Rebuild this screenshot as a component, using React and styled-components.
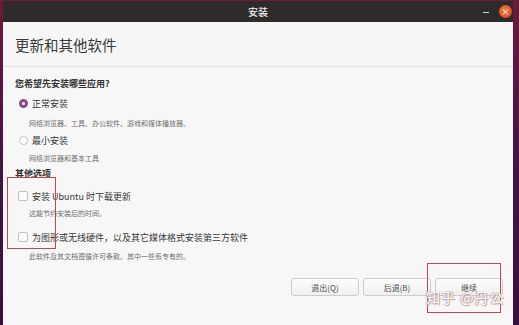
import React from 'react';
import styled, { createGlobalStyle } from 'styled-components';

const GlobalStyle = createGlobalStyle`
  html, body {
    margin: 0;
    padding: 0;
    width: 519px;
    height: 325px;
    overflow: hidden;
  }
  body {
    font-family: "Noto Sans CJK SC", "Noto Sans", "Liberation Sans", sans-serif;
  }
`;

const Desktop = styled.div`
  position: relative;
  width: 519px;
  height: 325px;
  box-sizing: border-box;
  padding: 1px 6px 0 3px;
  background: linear-gradient(180deg, #6e1a3a 0%, #4a1246 45%, #3a0e42 100%);
`;

const Window = styled.div`
  display: flex;
  flex-direction: column;
  height: 100%;
  background: #f7f7f7;
`;

const TitleBar = styled.div`
  display: grid;
  grid-template-columns: 1fr auto 1fr;
  align-items: center;
  height: 21px;
  background: #2e2b2b;
  color: #f2f2f2;
  font-size: 10px;
  font-weight: 500;
`;

const Title = styled.span`
  grid-column: 2;
`;

const Controls = styled.div`
  grid-column: 3;
  display: flex;
  justify-content: flex-end;
  align-items: center;
  gap: 10px;
  padding-right: 1px;
`;

const MinButton = styled.span`
  width: 6px;
  height: 1px;
  background: #cfcfcf;
  margin-top: 2px;
`;

const CloseButton = styled.span`
  display: flex;
  align-items: center;
  justify-content: center;
  width: 13px;
  height: 13px;
  border-radius: 50%;
  background: radial-gradient(circle at 45% 40%, #f07a4a 0%, #e0582a 60%, #c9461f 100%);
  color: #ffe7da;
  font-size: 9px;
  line-height: 1;
`;

const Header = styled.div`
  display: flex;
  align-items: center;
  height: 44px;
  padding-left: 12px;
  background: #f6f6f6;
  border-bottom: 1px solid #e4e4e4;
  color: #3a3a3a;
  font-size: 14.5px;
`;

const Body = styled.div`
  flex: 1;
  display: flex;
  flex-direction: column;
  padding: 10px 12px 0 12px;
  color: #3c3c3c;
`;

const SectionLabel = styled.div`
  margin-top: ${(p) => p.$mt || 0}px;
  line-height: 14px;
  font-size: 9px;
  font-weight: 700;
  color: #333;
`;

const OptionRow = styled.div`
  display: flex;
  align-items: center;
  gap: 4px;
  margin-top: ${(p) => p.$mt || 0}px;
  height: 18px;
  font-size: 9px;
  color: #383838;
`;

const Radio = styled.span`
  box-sizing: border-box;
  width: 9px;
  height: 9px;
  margin-left: 4px;
  border-radius: 50%;
  border: ${(p) => (p.$checked ? '3px solid #8c4a86' : '1px solid #c4c4c4')};
  background: #fff;
`;

const Check = styled.span`
  box-sizing: border-box;
  width: 10px;
  height: 10px;
  margin-left: 3px;
  border-radius: 2px;
  border: 1px solid #c2c2c2;
  background: #fbfbfb;
`;

const Desc = styled.div`
  margin-top: ${(p) => p.$mt || 0}px;
  padding-left: 14px;
  line-height: 12px;
  font-size: 7px;
  color: #6f6f6f;
`;

const Footer = styled.div`
  display: flex;
  justify-content: flex-end;
  gap: 4px;
  padding: 0 10px 29px 0;
`;

const Button = styled.button`
  box-sizing: border-box;
  width: 68px;
  height: 18px;
  padding: 0;
  border: 1px solid #cdcdcd;
  border-radius: 3px;
  background: linear-gradient(180deg, #fdfdfd, #f0f0f0);
  color: #4a4a4a;
  font-family: inherit;
  font-size: 8px;
`;

const Mark = styled.div`
  position: absolute;
  left: ${(p) => p.$x}px;
  top: ${(p) => p.$y}px;
  width: ${(p) => p.$w}px;
  height: ${(p) => p.$h}px;
  border: 1.5px solid #c0474f;
  box-sizing: border-box;
  pointer-events: none;
`;

const Watermark = styled.div`
  position: absolute;
  left: 426px;
  top: 290px;
  font-size: 14px;
  line-height: 14px;
  letter-spacing: 1px;
  color: #ffffff;
  text-shadow: 0 0 1px #a88, 1px 1px 1px #b99, -1px 0 1px #caa;
  pointer-events: none;
`;

export default function App() {
  return (
    <>
      <GlobalStyle />
      <Desktop>
        <Window>
          <TitleBar>
            <Title>安装</Title>
            <Controls>
              <MinButton />
              <CloseButton>×</CloseButton>
            </Controls>
          </TitleBar>
          <Header>更新和其他软件</Header>
          <Body>
            <SectionLabel>您希望先安装哪些应用?</SectionLabel>
            <OptionRow $mt={3}>
              <Radio $checked />
              正常安装
            </OptionRow>
            <Desc $mt={5}>网络浏览器、工具、办公软件、游戏和媒体播放器。</Desc>
            <OptionRow $mt={2}>
              <Radio />
              最小安装
            </OptionRow>
            <Desc $mt={3}>网络浏览器和基本工具</Desc>
            <SectionLabel $mt={3}>其他选项</SectionLabel>
            <OptionRow $mt={6}>
              <Check />
              安装 Ubuntu 时下载更新
            </OptionRow>
            <Desc $mt={2}>这能节约安装后的时间。</Desc>
            <OptionRow $mt={9}>
              <Check />
              为图形或无线硬件，以及其它媒体格式安装第三方软件
            </OptionRow>
            <Desc $mt={4}>此软件及其文档遵循许可条款。其中一些系专有的。</Desc>
          </Body>
          <Footer>
            <Button>退出(Q)</Button>
            <Button>后退(B)</Button>
            <Button>继续</Button>
          </Footer>
        </Window>
        <Mark $x={7} $y={177} $w={49} $h={72} />
        <Mark $x={427} $y={263} $w={74} $h={50} />
        <Watermark>知乎 @丹公</Watermark>
      </Desktop>
    </>
  );
}
